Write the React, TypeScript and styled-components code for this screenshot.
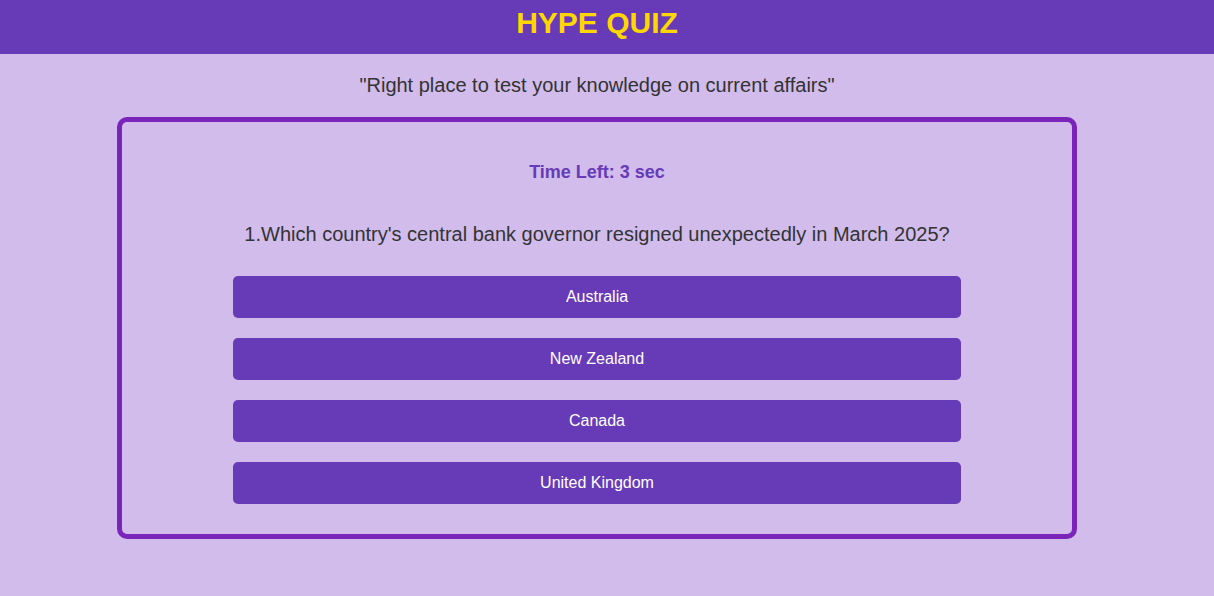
import React from "react";
import styled, { createGlobalStyle } from "styled-components";

const GlobalStyle = createGlobalStyle`
  html, body { margin: 0; padding: 0; }
  body {
    background: #d1bcec;
    font-family: "Liberation Sans", Arial, sans-serif;
    min-height: 596px;
  }
`;

const Header = styled.header`
  box-sizing: border-box;
  height: 54px;
  background: #673ab7;
  display: flex;
  align-items: flex-start;
  justify-content: center;
  padding: 8px 20px 0 0;
`;

const Title = styled.h1`
  margin: 0;
  font-size: 30px;
  font-weight: bold;
  color: #ffd700;
  line-height: 1;
`;

const Main = styled.main`
  display: flex;
  flex-direction: column;
  align-items: center;
  padding-right: 20px;
`;

const Tagline = styled.p`
  margin: 20px 0 20px;
  font-size: 20px;
  line-height: 23px;
  color: #333;
`;

const Card = styled.section`
  box-sizing: border-box;
  width: 960px;
  border: 5px solid #7b24b9;
  border-radius: 10px;
  padding: 40px 0 30px;
  display: flex;
  flex-direction: column;
  align-items: center;
`;

const Timer = styled.h3`
  margin: 0;
  font-size: 18px;
  line-height: 21px;
  font-weight: bold;
  color: #673ab7;
`;

const Question = styled.h2`
  margin: 40px 0 30px;
  font-size: 20px;
  line-height: 23px;
  font-weight: normal;
  color: #333;
`;

const Options = styled.div`
  display: flex;
  flex-direction: column;
  gap: 20px;
  width: 728px;
`;

const OptionButton = styled.button`
  height: 42px;
  border: none;
  border-radius: 5px;
  background: #673ab7;
  color: #fff;
  font-family: "Liberation Sans", Arial, sans-serif;
  font-size: 16px;
  cursor: pointer;
`;

const options = ["Australia", "New Zealand", "Canada", "United Kingdom"];

export default function App() {
  return (
    <>
      <GlobalStyle />
      <Header>
        <Title>HYPE QUIZ</Title>
      </Header>
      <Main>
        <Tagline>"Right place to test your knowledge on current affairs"</Tagline>
        <Card>
          <Timer>Time Left: 3 sec</Timer>
          <Question>
            1.Which country's central bank governor resigned unexpectedly in March 2025?
          </Question>
          <Options>
            {options.map((o) => (
              <OptionButton key={o}>{o}</OptionButton>
            ))}
          </Options>
        </Card>
      </Main>
    </>
  );
}
